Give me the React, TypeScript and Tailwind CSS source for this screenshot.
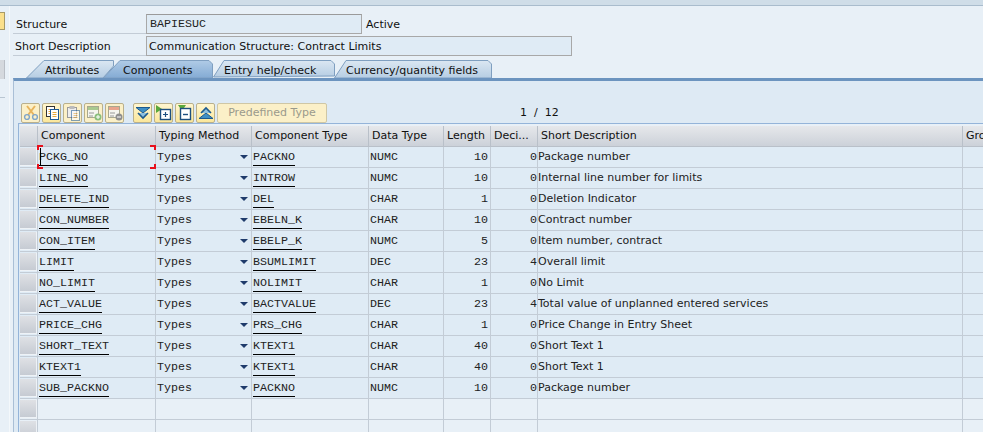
const ROWS = [
  ['PCKG_NO', 'PACKNO', 'NUMC', '10', '0', 'Package number'],
  ['LINE_NO', 'INTROW', 'NUMC', '10', '0', 'Internal line number for limits'],
  ['DELETE_IND', 'DEL', 'CHAR', '1', '0', 'Deletion Indicator'],
  ['CON_NUMBER', 'EBELN_K', 'CHAR', '10', '0', 'Contract number'],
  ['CON_ITEM', 'EBELP_K', 'NUMC', '5', '0', 'Item number, contract'],
  ['LIMIT', 'BSUMLIMIT', 'DEC', '23', '4', 'Overall limit'],
  ['NO_LIMIT', 'NOLIMIT', 'CHAR', '1', '0', 'No Limit'],
  ['ACT_VALUE', 'BACTVALUE', 'DEC', '23', '4', 'Total value of unplanned entered services'],
  ['PRICE_CHG', 'PRS_CHG', 'CHAR', '1', '0', 'Price Change in Entry Sheet'],
  ['SHORT_TEXT', 'KTEXT1', 'CHAR', '40', '0', 'Short Text 1'],
  ['KTEXT1', 'KTEXT1', 'CHAR', '40', '0', 'Short Text 1'],
  ['SUB_PACKNO', 'PACKNO', 'NUMC', '10', '0', 'Package number'],
];

const COLS = 'grid grid-cols-[18px_118px_96px_117px_75px_47px_47px_425px_60px]';
const SANS = 'font-["DejaVu_Sans",sans-serif] text-[11px]';
const MONO = 'font-["Liberation_Mono",monospace] text-[11.67px]';
const CELL = 'border-r border-b border-[#c3ccd6] overflow-hidden whitespace-nowrap';

function Tab({ label, width, points, active, className, textClass }: { label: string; width: number; points: string; active?: boolean; className: string; textClass: string }) {
  const id = active ? 'tabOn' : 'tabOff';
  return (
    <div className={`relative h-[18px] shrink-0 ${className}`} style={{ width }}>
      <svg className="absolute inset-0" width={width} height={18}>
        <defs>
          <linearGradient id={id} x1="0" y1="0" x2="0" y2="1">
            <stop offset="0" stopColor={active ? '#b0cbe6' : '#dbe7f2'} />
            <stop offset="1" stopColor={active ? '#84abd4' : '#b6cde3'} />
          </linearGradient>
        </defs>
        <polygon points={points} fill={`url(#${id})`} stroke="#7f9fc0" />
      </svg>
      <span className={`absolute top-[3px] text-[#101010] whitespace-nowrap ${SANS} ${textClass}`}>{label}</span>
    </div>
  );
}

function ToolButton({ children, className, off }: { children: React.ReactNode; className?: string; off?: boolean }) {
  return (
    <div className={`w-[19px] h-[20px] shrink-0 flex items-center justify-center rounded-[2px] border border-[#b9b08d] ${off ? 'bg-[#fbf0c8]' : 'bg-gradient-to-b from-[#fff6cf] to-[#fbe79b]'} ${className ?? ''}`}>
      {children}
    </div>
  );
}

function Sheet({ x, y, color = '#1d5a96', faded }: { x: number; y: number; color?: string; faded?: boolean }) {
  return (
    <g opacity={faded ? 0.55 : 1}>
      <rect x={x} y={y} width="8" height="10" fill="#fff" stroke={color} />
      <path d={`M${x + 2} ${y + 3}h4M${x + 2} ${y + 5}h4M${x + 2} ${y + 7}h4`} stroke="#e7a93c" />
    </g>
  );
}

function Icon({ children }: { children: React.ReactNode }) {
  return <svg width="16" height="16" viewBox="0 0 16 16" fill="none">{children}</svg>;
}

function Toolbar() {
  return (
    <div className="flex items-center h-[21px] pl-[3px]">
      <ToolButton off>
        <Icon>
          <path d="M4 1l7 9M12 1l-7 9" stroke="#e8b45c" strokeWidth="2" />
          <circle cx="4" cy="12" r="2.4" stroke="#7fa5c9" strokeWidth="1.4" />
          <circle cx="12" cy="12" r="2.4" stroke="#7fa5c9" strokeWidth="1.4" />
        </Icon>
      </ToolButton>
      <ToolButton className="ml-[2px]">
        <Icon>
          <Sheet x={2.5} y={1.5} color="#333" />
          <Sheet x={6.5} y={4.5} />
        </Icon>
      </ToolButton>
      <ToolButton off className="ml-[2px]">
        <Icon>
          <rect x="2.5" y="2.5" width="9" height="10" fill="#eee" stroke="#9a9a9a" />
          <rect x="4.5" y="1" width="5" height="3" fill="#bbb" />
          <Sheet x={6.5} y={5.5} faded />
        </Icon>
      </ToolButton>
      <ToolButton off className="ml-[2px]">
        <Icon>
          <rect x="1.5" y="1.5" width="11" height="11" fill="#f5f5ef" stroke="#a8a88f" />
          <path d="M2 3.5h10" stroke="#a9c98f" strokeWidth="3" />
          <path d="M3 8h5M3 11h4" stroke="#999" />
          <circle cx="12" cy="12" r="3.5" fill="#8bbf7d" />
          <path d="M10 12h4M12 10v4" stroke="#fff" />
        </Icon>
      </ToolButton>
      <ToolButton off className="ml-[2px]">
        <Icon>
          <rect x="1.5" y="1.5" width="11" height="11" fill="#f5f5ef" stroke="#a8a88f" />
          <path d="M2 3.5h10" stroke="#e8a58c" strokeWidth="3" />
          <path d="M3 8h5M3 11h4" stroke="#999" />
          <circle cx="12" cy="12" r="3.5" fill="#8f8f8f" />
          <path d="M10 12h4" stroke="#fff" />
        </Icon>
      </ToolButton>
      <ToolButton className="ml-[9px]">
        <Icon>
          <path d="M1 2.5h14L8 8z" fill="#3f8fc4" stroke="#1d5a8e" />
          <path d="M3 8l5 5 5-5" stroke="#1d5a8e" strokeWidth="1.6" fill="#8fc0de" />
        </Icon>
      </ToolButton>
      <ToolButton className="ml-[2px]">
        <Icon>
          <path d="M0 0v8l6-4z" fill="#5aa83c" />
          <rect x="4.5" y="4.5" width="10" height="10" fill="#fff" stroke="#1d4f80" strokeWidth="1.4" />
          <path d="M7 9.5h5M9.5 7v5" stroke="#1d4f80" strokeWidth="1.2" />
        </Icon>
      </ToolButton>
      <ToolButton className="ml-[2px]">
        <Icon>
          <path d="M1 0h8l-4 6z" fill="#5aa83c" />
          <rect x="3.5" y="3.5" width="10" height="11" fill="#fff" stroke="#1d4f80" strokeWidth="1.4" />
          <path d="M6 9.5h5" stroke="#1d4f80" strokeWidth="1.4" />
        </Icon>
      </ToolButton>
      <ToolButton className="ml-[2px]">
        <Icon>
          <path d="M1 13.5h14L8 8z" fill="#3f8fc4" stroke="#1d5a8e" />
          <path d="M3 8l5-5 5 5" stroke="#1d5a8e" strokeWidth="1.6" fill="#8fc0de" />
        </Icon>
      </ToolButton>
      <div className={`ml-[2px] w-[110px] h-[20px] shrink-0 flex items-center justify-center rounded-[2px] border border-[#cfc7a5] bg-[#fbf0c8] text-[#9a9a8c] ${SANS}`}>
        Predefined Type
      </div>
      <div className={`ml-[193px] text-[#111] whitespace-pre ${SANS}`}>1  /  12</div>
    </div>
  );
}

function RowHead() {
  return (
    <div className="border-r border-b border-[#c3ccd6] py-[1px]">
      <div className="w-[17px] h-[18px] bg-gradient-to-b from-[#dfe1e5] to-[#c6cbd3] border-r border-b border-[#eef2f6]" />
    </div>
  );
}

function ComponentTable() {
  const headers = ['Component', 'Typing Method', 'Component Type', 'Data Type', 'Length', 'Deci...', 'Short Description', 'Gro'];
  return (
    <div className="relative w-[1003px] bg-[#e8f0f7] pt-[2px]">
      <div className={`${COLS} h-[21px]`}>
        <div className="bg-gradient-to-b from-[#e6e8eb] to-[#ccd1d9] border-r border-b border-[#b9c0c9]" />
        {headers.map(h => (
          <div key={h} className={`bg-gradient-to-b from-[#e6e8eb] to-[#ccd1d9] border-r border-b border-[#b9c0c9] pl-[3px] leading-[20px] text-[#101010] overflow-hidden whitespace-nowrap ${SANS}`}>{h}</div>
        ))}
      </div>
      {ROWS.map(([name, type, dataType, len, dec, desc]) => (
        <div key={name} className={`${COLS} h-[21px] bg-[#dfebf5] text-[#222] leading-[20px]`}>
          <RowHead />
          <div className={`${CELL} pl-[1px] ${MONO}`}><span className="inline-block leading-[15px] border-b border-black">{name}</span></div>
          <div className={`${CELL} relative pl-[1px] ${MONO}`}>
            Types
            <span className="absolute right-[3px] top-[8px] border-x-[4px] border-x-transparent border-t-[4px] border-t-[#1f3b6b]" />
          </div>
          <div className={`${CELL} pl-[1px] ${MONO}`}><span className="inline-block leading-[15px] border-b border-black">{type}</span></div>
          <div className={`${CELL} pl-[1px] ${MONO}`}>{dataType}</div>
          <div className={`${CELL} pr-[2px] text-right ${MONO}`}>{len}</div>
          <div className={`${CELL} text-right ${MONO}`}>{dec}</div>
          <div className={`${CELL} ${SANS}`}>{desc}</div>
          <div className={CELL} />
        </div>
      ))}
      {[0, 1].map(i => (
        <div key={i} className={`${COLS} h-[21px]`}>
          <RowHead />
          {Array.from({ length: 8 }, (_, c) => <div key={c} className={CELL} />)}
        </div>
      ))}
      {/* focus corners and text cursor on the first cell */}
      <div className="absolute z-10 left-[17px] top-[21px] w-[119px] h-[24px]">
        <span className="absolute left-[3px] top-[3px] w-px h-[17px] bg-black" />
        <span className="absolute left-0 top-0 w-[6px] h-[5px] border-l-2 border-t-2 border-[#e8101c]" />
        <span className="absolute right-0 top-0 w-[6px] h-[5px] border-r-2 border-t-2 border-[#e8101c]" />
        <span className="absolute left-0 bottom-0 w-[6px] h-[5px] border-l-2 border-b-2 border-[#e8101c]" />
        <span className="absolute right-0 bottom-0 w-[6px] h-[5px] border-r-2 border-b-2 border-[#e8101c]" />
      </div>
    </div>
  );
}

export default function App() {
  return (
    <div className="w-[983px] h-[432px] overflow-hidden bg-[#e8f0f7] flex flex-col">
      <div className="h-[6px] shrink-0 bg-[#cfdde8] border-b border-[#a9bccd]" />
      <div className="flex flex-1 min-h-0">
        <div className="w-[10px] shrink-0 flex flex-col border-r border-[#f4f8fb]">
          <div className="mt-[6px] w-[5px] h-[18px] bg-[#fbe08c] border border-l-0 border-[#a89a66]" />
          <div className="mt-[30px] w-[5px] h-[19px] bg-[#d5d9de] border-r border-[#b9bec5]" />
          <div className="mt-[18px] w-[5px] h-px bg-[#b9c6d2]" />
        </div>
        <div className="flex-1 min-w-0 flex flex-col pl-[3px]">
          <div className="flex h-[28px] pt-[8px]">
            <div className={`w-[133px] shrink-0 h-[20px] pl-[3px] leading-[21px] border-b border-[#c3ccd6] text-[#101010] ${SANS}`}>Structure</div>
            <div className={`w-[216px] h-[20px] pl-[3px] leading-[18px] bg-[#dfebf5] border border-[#a8a8a8] border-t-[#9a9a9a] text-[#222] ${MONO}`}>BAPIESUC</div>
            <div className={`ml-[4px] leading-[21px] text-[#101010] ${SANS}`}>Active</div>
          </div>
          <div className="flex h-[22px] pt-[2px]">
            <div className={`w-[133px] shrink-0 h-[20px] pl-[2px] leading-[21px] border-b border-[#c3ccd6] text-[#101010] ${SANS}`}>Short Description</div>
            <div className={`w-[426px] h-[20px] pl-[2px] leading-[19px] bg-[#dfebf5] border border-[#a8a8a8] text-[#101010] ${SANS}`}>Communication Structure: Contract Limits</div>
          </div>
          <div className="flex mt-[4px] pl-[13px] h-[18px]">
            <Tab label="Attributes" width={88} points="0.5,18 18,0.5 87.5,0.5 87.5,6 77,18" className="" textClass="left-[19px]" />
            <Tab label="Components" width={110} points="0.5,18 17,0.5 106,0.5 109.5,4 109.5,18" active className="-ml-[11px]" textClass="left-[20px]" />
            <Tab label="Entry help/check" width={122} points="0.5,17 11,0.5 118,0.5 121.5,4 121.5,16" className="" textClass="left-[11px]" />
            <Tab label="Currency/quantity fields" width={158} points="0.5,18 12,0.5 154,0.5 157.5,4 157.5,18" className="-ml-[1px]" textClass="left-[12px]" />
          </div>
          <div className="flex-1 min-h-0 flex flex-col bg-[#deeaf4] border-t-[3px] border-t-[#6c94bf] border-l border-l-[#a9bfd6] pl-[4px] pt-[22px] overflow-hidden">
            <Toolbar />
            <div className="border-t border-l border-[#94b4d9] pl-px">
              <ComponentTable />
            </div>
          </div>
        </div>
      </div>
    </div>
  );
}
